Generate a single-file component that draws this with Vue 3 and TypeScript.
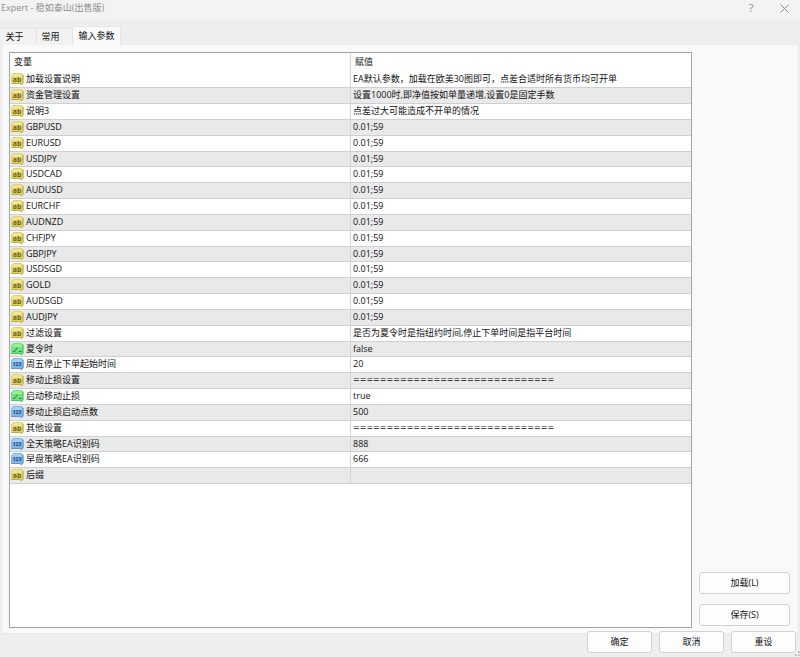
<script setup lang="ts">
import { ref } from 'vue'

type Kind = 'text' | 'bool' | 'int'
interface Param {
  kind: Kind
  name: string
  value: string
}

const pairs = ['GBPUSD', 'EURUSD', 'USDJPY', 'USDCAD', 'AUDUSD', 'EURCHF', 'AUDNZD', 'CHFJPY', 'GBPJPY', 'USDSGD', 'GOLD', 'AUDSGD', 'AUDJPY']
const rule = '='.repeat(30)

const params: Param[] = [
  { kind: 'text', name: '加载设置说明', value: 'EA默认参数，加载在欧美30图即可，点差合适时所有货币均可开单' },
  { kind: 'text', name: '资金管理设置', value: '设置1000时,即净值按如单量递增,设置0是固定手数' },
  { kind: 'text', name: '说明3', value: '点差过大可能造成不开单的情况' },
  ...pairs.map((name): Param => ({ kind: 'text', name, value: '0.01;59' })),
  { kind: 'text', name: '过滤设置', value: '是否为夏令时是指纽约时间,停止下单时间是指平台时间' },
  { kind: 'bool', name: '夏令时', value: 'false' },
  { kind: 'int', name: '周五停止下单起始时间', value: '20' },
  { kind: 'text', name: '移动止损设置', value: rule },
  { kind: 'bool', name: '启动移动止损', value: 'true' },
  { kind: 'int', name: '移动止损启动点数', value: '500' },
  { kind: 'text', name: '其他设置', value: rule },
  { kind: 'int', name: '全天策略EA识别码', value: '888' },
  { kind: 'int', name: '早盘策略EA识别码', value: '666' },
  { kind: 'text', name: '后缀', value: '' },
]

const tabs = ['关于', '常用', '输入参数']
const active = ref(2)
</script>

<template>
  <div class="dialog">
    <header class="titlebar">
      <span class="title">Expert - 稳如泰山(出售版)</span>
      <button class="caption" type="button" aria-label="帮助">?</button>
      <button class="caption" type="button" aria-label="关闭">
        <svg width="9" height="9" viewBox="0 0 9 9"><path d="M.5.5l8 8M8.500.5l-8 8" fill="none" stroke="#8c8c8c" /></svg>
      </button>
    </header>

    <nav class="tabs" role="tablist">
      <button
        v-for="(tab, i) in tabs"
        :key="tab"
        class="tab"
        :class="{ active: i === active }"
        type="button"
        role="tab"
        :aria-selected="i === active"
        @click="active = i"
      >{{ tab }}</button>
    </nav>

    <main class="panel">
      <div class="list">
        <table>
          <thead>
            <tr><th>变量</th><th>赋值</th></tr>
          </thead>
          <tbody>
            <tr v-for="p in params" :key="p.name">
              <td>
                <div class="name">
                  <svg class="icon" :class="p.kind" viewBox="0 0 13 12" aria-hidden="true">
                    <path class="sheet" d="M0 2.500L2.500 0H10l2.500 1.500V10l-1.500 2-2.500-1H0z" />
                    <path class="shine" d="M1 3l2-2h6.500L11 2.500v1.500H1z" />
                    <path class="edge" d="M12 2v8l-1.200 1.400L8.500 10.500H.5" />
                    <path v-if="p.kind === 'bool'" class="mark" d="M2 8.500h1.500l3-4M8 8.500h2.500" />
                    <text v-else-if="p.kind === 'int'" class="glyph" x="6" y="8">123</text>
                    <text v-else class="glyph" x="6" y="9">ab</text>
                  </svg>
                  <span>{{ p.name }}</span>
                </div>
              </td>
              <td :class="{ rule: p.value === rule }">{{ p.value }}</td>
            </tr>
          </tbody>
        </table>
      </div>
      <aside class="side">
        <button class="btn" type="button">加载(L)</button>
        <button class="btn" type="button">保存(S)</button>
      </aside>
    </main>

    <footer class="actions">
      <button class="btn" type="button">确定</button>
      <button class="btn" type="button">取消</button>
      <button class="btn" type="button">重设</button>
      <svg class="grip" width="6" height="6" viewBox="0 0 6 6" aria-hidden="true">
        <path d="M4 0h2v2H4zM1 3h2v2H1zM4 3h2v2H4z" fill="#c4c4c4" />
      </svg>
    </footer>
  </div>
</template>

<style>
body {
  margin: 0;
}
</style>

<style scoped>
.dialog {
  display: flex;
  flex-direction: column;
  box-sizing: border-box;
  min-height: 100vh;
  background: #eeeeee;
  color: #111;
  font: 9px/12px "Open Sans", "Noto Sans CJK SC", sans-serif;
}
button {
  padding: 0;
  border: 0;
  background: none;
  color: inherit;
  font: inherit;
}
.titlebar {
  display: flex;
  align-items: center;
  height: 20px;
  padding: 0 0 4px 1px;
  box-sizing: border-box;
  background: #f3f3f3;
  color: #8c8c8c;
}
.title {
  flex: 1;
}
.caption {
  display: flex;
  align-items: center;
  justify-content: center;
  width: 34px;
  height: 16px;
  font-size: 11px;
}
.caption:last-child {
  width: 32px;
}
.tabs {
  display: flex;
  align-items: flex-end;
  height: 25px;
  padding-left: 1px;
}
.tab {
  height: 17px;
  width: 36px;
  padding-right: 8px;
  box-sizing: border-box;
  border: 1px solid #e4e4e4;
  border-bottom: 0;
  border-left-width: 0;
  background: #f2f2f2;
}
.tab.active {
  width: 48px;
  height: 19px;
  padding: 0;
  border-color: #e6e6e6;
  background: #f9f9f9;
}
.panel {
  flex: 1;
  display: flex;
  gap: 7px;
  margin: 0 1px;
  padding: 7px 8px 5px 7px;
  border: 1px solid #e8e8e8;
  border-top: 0;
  background: #f9f9f9;
}
.list {
  flex: 1;
  border: 1px solid #a2a4ab;
  background: #fff;
}
table {
  width: 100%;
  table-layout: fixed;
  border-collapse: collapse;
}
th,
td {
  padding: 0 2px;
  text-align: left;
  font-weight: 400;
  white-space: nowrap;
  overflow: hidden;
}
th {
  height: 18px;
  padding: 0 4px;
}
th + th,
td + td {
  border-left: 1px solid #d4d4d4;
}
tbody td {
  box-sizing: border-box;
  height: 16px;
  line-height: 12px;
  border-bottom: 1px solid #d0d0d0;
}
/* Every sixth row is one pixel shorter, for a pitch just under 16px. */
tbody tr:nth-child(6n) td {
  height: 15px;
}
tbody tr:nth-child(even) {
  background: #e9e9e9;
}
tbody td:first-child {
  padding-left: 1px;
}
.rule {
  font-family: "DejaVu Sans", sans-serif;
  font-size: 8px;
}
.name {
  display: flex;
  align-items: center;
  gap: 2px;
}
.icon {
  width: 13px;
  height: 12px;
}
.sheet {
  fill: #e0d36c;
}
.shine {
  fill: #efe793;
}
.edge {
  fill: none;
  stroke: #b9ab48;
}
.glyph {
  fill: #6b5f1c;
  font: 700 7px "Open Sans", sans-serif;
  text-anchor: middle;
}
.bool .sheet {
  fill: #6fe07e;
}
.bool .shine {
  fill: #93f09d;
}
.bool .edge {
  stroke: #4fc163;
}
.mark {
  fill: none;
  stroke: #1d7d34;
}
.int .sheet {
  fill: #7fb6e8;
}
.int .shine {
  fill: #a3cff5;
}
.int .edge {
  stroke: #5f97cc;
}
.int .glyph {
  fill: #1c4677;
  font-size: 5px;
}
.side {
  display: flex;
  flex-direction: column;
  justify-content: flex-end;
  gap: 10px;
  width: 91px;
  padding-bottom: 2px;
}
.btn {
  height: 22px;
  box-sizing: border-box;
  border: 1px solid #d2d2d2;
  border-radius: 3px;
  background: #fdfdfd;
}
.actions {
  position: relative;
  display: flex;
  justify-content: flex-end;
  gap: 7px;
  margin-top: -3px;
  padding: 0 4px 4px;
}
.actions .btn {
  width: 65px;
}
.grip {
  position: absolute;
  right: 0;
  bottom: 0;
}
</style>
